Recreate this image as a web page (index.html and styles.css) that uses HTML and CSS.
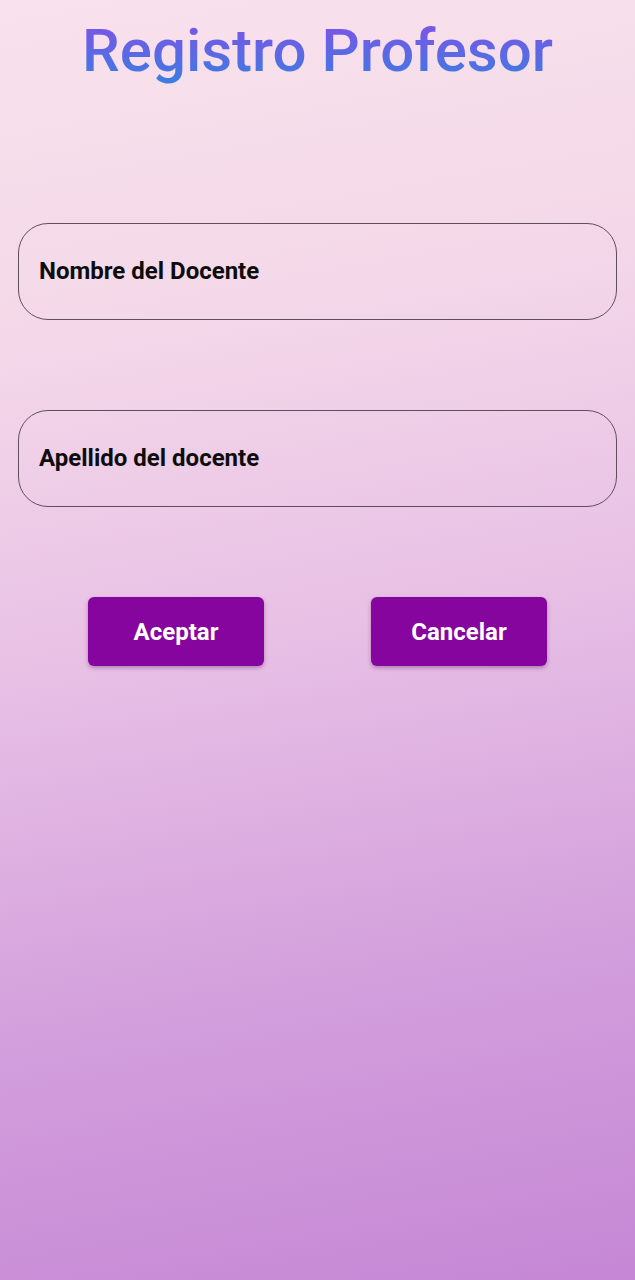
FILE: index.html
```html
<!DOCTYPE html>
<html lang="es">
<head>
<meta charset="utf-8">
<link rel="stylesheet" href="styles.css">
</head>
<body>
<main class="page">
  <h1 class="title">Registro Profesor</h1>
  <div class="fields">
    <div class="field"><span class="field-label">Nombre del Docente</span></div>
    <div class="field"><span class="field-label">Apellido del docente</span></div>
  </div>
  <div class="actions">
    <button class="btn">Aceptar</button>
    <button class="btn">Cancelar</button>
  </div>
</main>
</body>
</html>
```

FILE: styles.css
```css
html, body {
  margin: 0;
  padding: 0;
}
body {
  width: 635px;
  min-height: 1280px;
  font-family: Roboto, "Noto Sans", sans-serif;
  background: linear-gradient(170deg, #f8e2ec 0%, #f4d8e9 25%, #e7bfe5 50%, #d39fdc 75%, #c587d5 100%);
}
.page {
  display: flex;
  flex-direction: column;
  padding: 0 18px;
}
.title {
  margin: 18px 0 0;
  text-align: center;
  font-size: 60px;
  font-weight: 500;
  line-height: 66px;
  background: linear-gradient(180deg, #8250e8 0%, #3a7ee0 100%);
  -webkit-background-clip: text;
  background-clip: text;
  color: transparent;
}
.fields {
  display: flex;
  flex-direction: column;
  gap: 90px;
  margin-top: 139px;
}
.field {
  box-sizing: border-box;
  height: 97px;
  border: 1.5px solid #5e4f5c;
  border-radius: 30px;
  display: flex;
  align-items: center;
  padding: 0 20px 2px;
}
.field-label {
  font-size: 24px;
  font-weight: 700;
  color: #0d0d0d;
}
.actions {
  display: flex;
  justify-content: center;
  gap: 107px;
  margin-top: 90px;
}
.btn {
  width: 176px;
  height: 69px;
  border: none;
  border-radius: 6px;
  background: #86059f;
  color: #fff;
  font-family: Roboto, sans-serif;
  font-size: 24px;
  font-weight: 700;
  box-shadow: 0 2px 4px rgba(80, 0, 90, 0.35);
}
```
